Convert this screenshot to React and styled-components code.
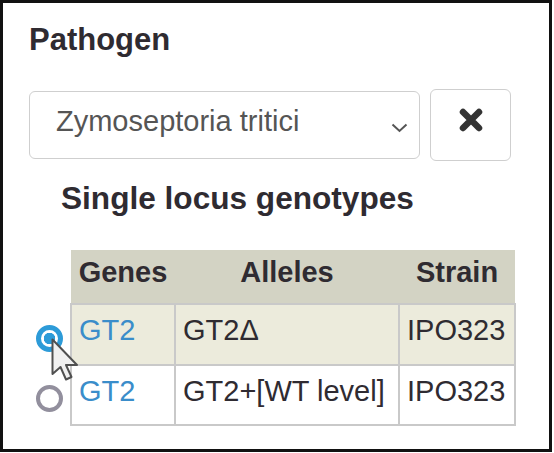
import styled, { createGlobalStyle } from "styled-components";

const GlobalStyle = createGlobalStyle`
  html, body {
    margin: 0;
    padding: 0;
    background: #fff;
  }

  body {
    font-family: "Liberation Sans", Arial, Helvetica, sans-serif;
    color: #333;
  }
`;

const Frame = styled.div`
  box-sizing: border-box;
  width: 552px;
  height: 452px;
  padding: 20px 0 0 26px;
  border: 3px solid #111;
  background: #fff;
`;

const Heading = styled.h4`
  margin: 0;
  font-size: 31px;
  line-height: 34px;
  font-weight: 700;
  color: #2f2b31;
`;

const PickerRow = styled.div`
  display: flex;
  align-items: center;
  gap: 10px;
  margin-top: 32px;
`;

const SelectBox = styled.div`
  box-sizing: border-box;
  display: flex;
  align-items: flex-start;
  justify-content: space-between;
  width: 391px;
  height: 68px;
  padding: 12px 11px 0 26px;
  border: 1.5px solid #cfcfcf;
  border-radius: 6px;
  font-size: 29px;
  line-height: 34px;
  color: #555;

  svg {
    margin-top: 19px;
  }
`;

const ClearButton = styled.button`
  box-sizing: border-box;
  display: flex;
  align-items: center;
  justify-content: center;
  width: 81px;
  height: 72px;
  padding: 0 0 10px 0;
  border: 1.5px solid #cfcfcf;
  border-radius: 6px;
  background: #fff;
  cursor: pointer;
`;

const SubHeading = styled.h4`
  margin: 20px 0 0 32px;
  font-size: 31.6px;
  line-height: 34px;
  font-weight: 700;
  color: #2f2b31;
`;

const Table = styled.table`
  margin-top: 35px;
  border-collapse: collapse;
  table-layout: fixed;
  width: 486px;
  font-size: 29px;
  line-height: 34px;
`;

const HeadCell = styled.th`
  height: 54px;
  padding: 5px 0 0 0;
  box-sizing: border-box;
  vertical-align: top;
  text-align: center;
  font-weight: 700;
  color: #2f2b31;
  background: ${(props) => (props.$blank ? "transparent" : "#d3d3c4")};
`;

const BodyRow = styled.tr`
  background: ${(props) => (props.$active ? "#ecebdc" : "#fff")};
`;

const RadioCell = styled.td`
  padding: 0;
  background: #fff;
  vertical-align: middle;
  text-align: center;
`;

const Cell = styled.td`
  height: ${(props) => props.$height}px;
  box-sizing: border-box;
  padding: 8px 0 0 7px;
  vertical-align: top;
  white-space: nowrap;
  overflow: visible;
  border: 2px solid #c9c9c9;
  color: ${(props) => (props.$link ? "#3a8dca" : "#2f2b31")};
`;

const RadioWrap = styled.span`
  position: relative;
  display: inline-block;
  width: 27px;
  height: 27px;
  margin: 3px 1px 0 0;
  vertical-align: middle;
`;

const RadioDot = styled.span`
  box-sizing: border-box;
  display: block;
  width: 27px;
  height: 27px;
  border-radius: 50%;
  border: ${(props) =>
    props.$checked ? "5px solid #2d9bd8" : "4px solid #928f9d"};
  background: ${(props) =>
    props.$checked
      ? "radial-gradient(circle, #2d9bd8 0 5.5px, #fff 6px)"
      : "#fff"};
`;

const Pointer = styled.svg`
  position: absolute;
  left: 15px;
  top: 13px;
  z-index: 2;
  pointer-events: none;
`;

const rows = [
  { gene: "GT2", allele: "GT2Δ", strain: "IPO323", active: true, height: 61 },
  {
    gene: "GT2",
    allele: "GT2+[WT level]",
    strain: "IPO323",
    active: false,
    height: 60,
  },
];

function Chevron() {
  return (
    <svg width="17" height="10" viewBox="0 0 17 10">
      <polyline
        points="1.5,1.5 8.5,8 15.5,1.5"
        fill="none"
        stroke="#555"
        strokeWidth="2"
      />
    </svg>
  );
}

function TimesIcon() {
  return (
    <svg width="24" height="24" viewBox="0 0 24 24">
      <path
        d="M4 4 L20 20 M20 4 L4 20"
        stroke="#333"
        strokeWidth="6.5"
        strokeLinecap="round"
      />
    </svg>
  );
}

function MouseArrow() {
  return (
    <Pointer width="30" height="45" viewBox="0 0 30 45">
      <path
        d="M1.5 1.5 L1.5 36 L9.5 29 L15 41.5 L20.5 39 L15 27 L26 27 Z"
        fill="#f0f0f0"
        stroke="#505050"
        strokeWidth="2"
        strokeLinejoin="round"
      />
    </Pointer>
  );
}

export default function App() {
  return (
    <>
      <GlobalStyle />
      <Frame>
        <Heading>Pathogen</Heading>
        <PickerRow>
          <SelectBox>
            <span>Zymoseptoria tritici</span>
            <Chevron />
          </SelectBox>
          <ClearButton>
            <TimesIcon />
          </ClearButton>
        </PickerRow>
        <SubHeading>Single locus genotypes</SubHeading>
        <Table>
          <colgroup>
            <col style={{ width: 42 }} />
            <col style={{ width: 104 }} />
            <col style={{ width: 224 }} />
            <col style={{ width: 116 }} />
          </colgroup>
          <thead>
            <tr>
              <HeadCell $blank />
              <HeadCell>Genes</HeadCell>
              <HeadCell>Alleles</HeadCell>
              <HeadCell>Strain</HeadCell>
            </tr>
          </thead>
          <tbody>
            {rows.map((row, index) => (
              <BodyRow key={index} $active={row.active}>
                <RadioCell>
                  <RadioWrap>
                    <RadioDot $checked={row.active} />
                    {row.active && <MouseArrow />}
                  </RadioWrap>
                </RadioCell>
                <Cell $link $height={row.height}>
                  {row.gene}
                </Cell>
                <Cell $height={row.height}>{row.allele}</Cell>
                <Cell $height={row.height}>{row.strain}</Cell>
              </BodyRow>
            ))}
          </tbody>
        </Table>
      </Frame>
    </>
  );
}
